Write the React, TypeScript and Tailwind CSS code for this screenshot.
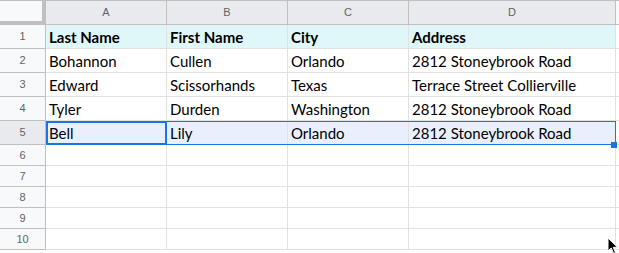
import React from 'react';

const cols = [
  { key: 'A', w: 'w-[121px]' },
  { key: 'B', w: 'w-[121px]' },
  { key: 'C', w: 'w-[121px]' },
  { key: 'D', w: 'w-[207px]' },
];

const rows: string[][] = [
  ['Last Name', 'First Name', 'City', 'Address'],
  ['Bohannon', 'Cullen', 'Orlando', '2812 Stoneybrook Road'],
  ['Edward', 'Scissorhands', 'Texas', 'Terrace Street Collierville'],
  ['Tyler', 'Durden', 'Washington', '2812 Stoneybrook Road'],
  ['Bell', 'Lily', 'Orlando', '2812 Stoneybrook Road'],
  ['', '', '', ''],
  ['', '', '', ''],
  ['', '', '', ''],
  ['', '', '', ''],
  ['', '', '', ''],
];

const Cursor = () => (
  <svg width="12" height="18" viewBox="0 0 12 18" className="absolute left-[607px] top-[237px] z-20">
    <path d="M1 1 L1 14 L4.2 11 L6.6 16.5 L8.6 15.6 L6.3 10.3 L10.6 10.3 Z" fill="#000" stroke="#fff" strokeWidth="1" />
  </svg>
);

export default function App() {
  return (
    <div className="relative w-[619px] h-[253px] overflow-hidden bg-white font-['Lato','Liberation_Sans',sans-serif] text-[15px] text-black">
      {/* column headers */}
      <div className="flex h-[25px] border-t border-[#c0c0c0]">
        <div className="w-[46px] shrink-0 bg-[#f8f9fa] border-r-4 border-b-4 border-[#c0c0c0]" />
        {cols.map((c) => (
          <div
            key={c.key}
            className={`${c.w} shrink-0 flex items-center justify-center bg-[#e8eaed] border-r border-b border-[#c0c0c0] font-['Liberation_Sans',sans-serif] text-[11px] text-[#5f6368]`}
          >
            {c.key}
          </div>
        ))}
        <div className="flex-1 bg-[#f8f9fa] border-b border-[#c0c0c0]" />
      </div>

      {rows.map((r, i) => {
        const tall = i < 5;
        const selected = i === 4;
        return (
          <div key={i} className={`relative flex ${tall ? 'h-[24px]' : 'h-[21px]'} ${selected ? 'z-10' : ''}`}>
            <div
              className={`w-[46px] shrink-0 flex items-center justify-center border-r border-b border-[#c0c0c0] font-['Liberation_Sans',sans-serif] text-[11px] text-[#5f6368] ${selected ? 'bg-[#e8eaed]' : 'bg-[#f8f9fa]'}`}
            >
              {i + 1}
            </div>
            {r.map((v, j) => (
              <div
                key={j}
                className={`${cols[j].w} shrink-0 flex items-center pl-[3px] pt-[1px] border-r border-b border-[#e2e2e2] whitespace-nowrap overflow-hidden ${i === 0 ? 'bg-[#e0f7fa] font-bold' : ''} ${selected ? 'bg-[#e8f0fe]' : ''}`}
              >
                {v}
              </div>
            ))}
            <div className="flex-1 border-b border-[#e2e2e2]" />
            {selected && (
              <>
                <div className="absolute left-[46px] top-0 w-[570px] h-[24px] border border-[#1a73e8]" />
                <div className="absolute left-[46px] top-0 w-[121px] h-[24px] border-2 border-[#1a73e8]" />
                <div className="absolute left-[611px] top-[21px] w-[6px] h-[6px] bg-[#1a73e8]" />
              </>
            )}
          </div>
        );
      })}
      <Cursor />
    </div>
  );
}
